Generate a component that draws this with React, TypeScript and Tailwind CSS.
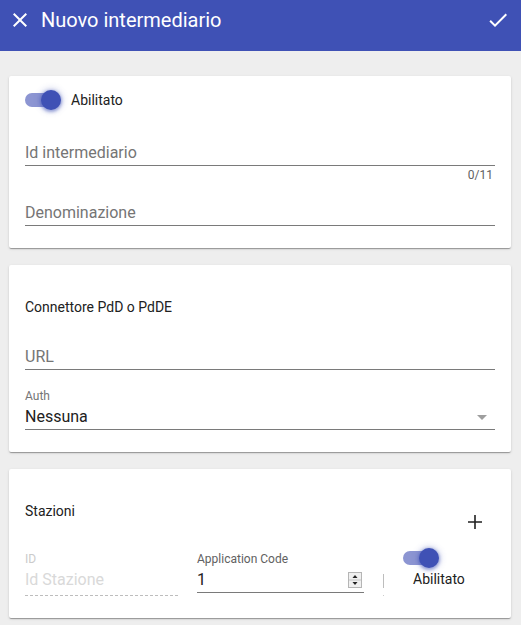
import React from 'react';

function CloseIcon() {
  return (
    <svg width="24" height="24" viewBox="0 0 24 24" fill="#ffffff">
      <path d="M19 6.41L17.59 5 12 10.59 6.41 5 5 6.41 10.59 12 5 17.59 6.41 19 12 13.41 17.59 19 19 17.59 13.41 12z" />
    </svg>
  );
}

function CheckIcon() {
  return (
    <svg width="24" height="24" viewBox="0 0 24 24" fill="#ffffff">
      <path d="M9 16.17L4.83 12l-1.42 1.41L9 19 21 7l-1.41-1.41z" />
    </svg>
  );
}

function AddIcon() {
  return (
    <svg width="24" height="24" viewBox="0 0 24 24" fill="#212121">
      <path d="M19 12.8h-6.2V19h-1.6v-6.2H5v-1.6h6.2V5h1.6v6.2H19z" />
    </svg>
  );
}

function Toggle() {
  return (
    <div className="relative h-5 w-[37px] flex items-center">
      <div className="h-[14px] w-[34px] rounded-full bg-[#8c95d2]" />
      <div className="absolute left-[16px] top-0 h-5 w-5 rounded-full bg-[#3f51b5] shadow-[0_1px_3px_1px_rgba(63,81,181,0.45),0_0_6px_2px_rgba(63,81,181,0.2)]" />
    </div>
  );
}

function Spinner() {
  return (
    <svg width="14" height="16" viewBox="0 0 14 16">
      <rect x="0.5" y="0.5" width="13" height="15" fill="#f0f0f0" stroke="#b5b5b5" />
      <line x1="1" y1="8" x2="13" y2="8" stroke="#c4c4c4" />
      <path d="M4.5 6 L7 3 L9.5 6 Z" fill="#222" />
      <path d="M4.5 10 L7 13 L9.5 10 Z" fill="#222" />
    </svg>
  );
}

function Card({ children, className = '' }: { children: React.ReactNode; className?: string }) {
  return (
    <div className={`bg-white rounded-[2px] px-4 shadow-[0_2px_1px_-1px_rgba(0,0,0,0.2),0_1px_1px_0_rgba(0,0,0,0.14),0_1px_3px_0_rgba(0,0,0,0.12)] ${className}`}>
      {children}
    </div>
  );
}

function Underline() {
  return <div className="mt-[2px] h-px bg-[#7a7a7a]" />;
}

export default function App() {
  return (
    <div className="min-h-[625px] bg-[#eeeeee] font-['Roboto',sans-serif]">
      <header className="h-[51px] bg-[#3f51b5] flex items-start justify-between pt-2 pl-2 pr-[11px]">
        <div className="flex items-center">
          <CloseIcon />
          <span className="ml-[9px] text-[20px] leading-6 text-white">Nuovo intermediario</span>
        </div>
        <CheckIcon />
      </header>

      <main className="pt-[25px] pl-[9px] pr-[10px] flex flex-col gap-[17px] pb-2">
        <Card className="pt-3 pb-[22px]">
          <div className="h-6 flex items-center">
            <Toggle />
            <span className="ml-[9px] text-[14px] text-[#212121]">Abilitato</span>
          </div>
          <div className="mt-[31px] text-[16px] leading-5 text-[#757575]">Id intermediario</div>
          <Underline />
          <div className="mt-px text-right pr-[2px] text-[12px] leading-4 text-[#616161]">0/11</div>
          <div className="mt-[20px] text-[16px] leading-5 text-[#757575]">Denominazione</div>
          <Underline />
        </Card>

        <Card className="pt-8 pb-[22px]">
          <div className="text-[14px] leading-5 text-[#212121]">Connettore PdD o PdDE</div>
          <div className="mt-[30px] text-[16px] leading-5 text-[#757575]">URL</div>
          <Underline />
          <div className="mt-[18px] text-[12px] leading-4 text-[#757575]">Auth</div>
          <div className="mt-[3px] flex items-center justify-between">
            <span className="text-[16px] leading-5 text-[#212121]">Nessuna</span>
            <span className="mr-2 h-0 w-0 border-x-[5px] border-t-[5px] border-x-transparent border-t-[#9e9e9e]" />
          </div>
          <Underline />
        </Card>

        <Card className="pt-8 pb-[22px]">
          <div className="flex items-start justify-between">
            <span className="text-[14px] leading-5 text-[#212121]">Stazioni</span>
            <span className="mt-[9px] mr-2">
              <AddIcon />
            </span>
          </div>
          <div className="mt-[7px] flex items-start">
            <div className="w-[155px] pt-[10px]">
              <div className="text-[12px] leading-4 text-[#cbcbcb]">ID</div>
              <div className="mt-[3px] text-[16px] leading-5 text-[#d9d9d9]">Id Stazione</div>
              <div className="mt-[5px] h-px bg-[linear-gradient(to_right,#bdbdbd_0,#bdbdbd_60%,transparent_0)] bg-[length:5px_1px] bg-repeat-x" />
            </div>
            <div className="ml-[17px] w-[167px] pt-[10px]">
              <div className="text-[12px] leading-4 text-[#616161]">Application Code</div>
              <div className="mt-[3px] flex items-center justify-between pr-[2px]">
                <span className="text-[16px] leading-5 text-[#212121]">1</span>
                <Spinner />
              </div>
              <Underline />
            </div>
            <div className="ml-[19px] w-[2px] pt-[33px] flex flex-col items-start">
              <div className="h-[14px] w-px bg-[#bdbdbd]" />
              <div className="mt-[7px] h-px w-px bg-[#cccccc]" />
            </div>
            <div className="ml-[18px] pt-[7px] flex flex-col">
              <Toggle />
              <span className="ml-[10px] mt-[1px] text-[14px] leading-5 text-[#212121]">Abilitato</span>
            </div>
          </div>
        </Card>
      </main>
    </div>
  );
}
